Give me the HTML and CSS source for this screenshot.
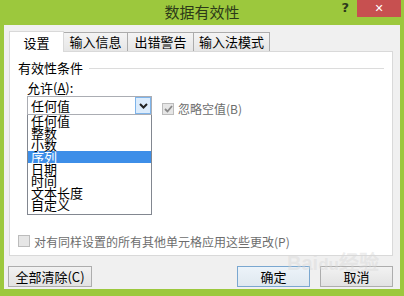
FILE: index.html
```html
<!DOCTYPE html>
<html lang="zh-CN">
<head>
  <meta charset="UTF-8" />
  <title>数据有效性</title>
  <link rel="stylesheet" href="styles.css">
</head>
<body>
  <div class="dialog">
    <div class="titlebar">
      <span></span>
      <span class="title">数据有效性</span>
      <div class="controls">
        <span class="help">?</span>
        <span class="close">✕</span>
      </div>
    </div>
    <div class="content">
      <div class="tabs">
        <span class="tab active">设置</span>
        <span class="tab">输入信息</span>
        <span class="tab">出错警告</span>
        <span class="tab">输入法模式</span>
      </div>
      <div class="panel">
        <div class="group-title"><span>有效性条件</span><i></i></div>
        <div class="label">允许(<u>A</u>):</div>
        <div class="row">
          <div class="combo">
            <div class="select">
              <span>任何值</span>
              <span class="arrow">
                <svg width="9" height="6" viewBox="0 0 9 6"><path d="M1 1 L4.5 4.5 L8 1" fill="none" stroke="#222" stroke-width="2"/></svg>
              </span>
            </div>
            <ul class="list">
              <li>任何值</li>
              <li>整数</li>
              <li>小数</li>
              <li class="sel">序列</li>
              <li>日期</li>
              <li>时间</li>
              <li>文本长度</li>
              <li>自定义</li>
            </ul>
          </div>
          <label class="check disabled">
            <span class="box checked">
              <svg width="9" height="8" viewBox="0 0 9 8"><path d="M1 4 L3.5 6.5 L8 1" fill="none" stroke="#8a8a8a" stroke-width="1.8"/></svg>
            </span>
            忽略空值(B)
          </label>
        </div>
        <label class="check disabled apply">
          <span class="box"></span>
          对有同样设置的所有其他单元格应用这些更改(P)
        </label>
      </div>
      <div class="buttons">
        <button class="btn">全部清除(C)</button>
        <span class="spacer"></span>
        <button class="btn default">确定</button>
        <button class="btn">取消</button>
      </div>
      <div class="watermark">Bai<span>du</span>经验</div>
    </div>
  </div>
</body>
</html>
```

FILE: styles.css
```css
* {
  box-sizing: border-box;
}
body {
  margin: 0;
  width: 404px;
  height: 296px;
  background: #9cc83d;
  font-family: "Noto Sans CJK SC", "Noto Sans", sans-serif;
  font-size: 12px;
  color: #000;
  overflow: hidden;
}
.dialog {
  display: flex;
  flex-direction: column;
  height: 296px;
}
.titlebar {
  height: 25px;
  flex: none;
  display: grid;
  grid-template-columns: 1fr auto 1fr;
  align-items: start;
}
.title {
  font-size: 15px;
  line-height: 24px;
  color: #2c3a19;
}
.controls {
  justify-self: end;
  display: flex;
  align-items: flex-start;
  margin-right: 3px;
}
.help {
  font-family: "DejaVu Sans", sans-serif;
  font-weight: bold;
  font-size: 13px;
  line-height: 16px;
  color: #2d3a1b;
  margin-right: 8px;
}
.close {
  width: 44px;
  height: 17px;
  background: #c75050;
  color: #fff;
  font-family: "DejaVu Sans", sans-serif;
  font-size: 11px;
  font-weight: bold;
  line-height: 17px;
  text-align: center;
}
.content {
  position: relative;
  height: 264px;
  flex: none;
  background: #f0f0f0;
  margin: 0 4px 0 4px;
  padding: 7px 7px 0 5px;
  display: flex;
  flex-direction: column;
}
.tabs {
  display: flex;
  align-items: flex-end;
  height: 19px;
  flex: none;
  position: relative;
  z-index: 1;
}
.tab {
  height: 19px;
  line-height: 18px;
  font-size: 13px;
  border: 1px solid #acacac;
  border-bottom: none;
  border-left: none;
  background: linear-gradient(#f4f4f4, #e6e6e6);
  text-align: center;
  white-space: nowrap;
}
.tab:nth-child(2) { width: 64px; }
.tab:nth-child(3) { width: 66px; }
.tab:nth-child(4) { width: 76px; }
.tab.active {
  width: 55px;
  height: 21px;
  line-height: 21px;
  background: #fff;
  border: 1px solid #d9d9d9;
  border-bottom: none;
  margin-bottom: -1px;
}
.panel {
  height: 205px;
  flex: none;
  background: #fff;
  border: 1px solid #d9d9d9;
  padding: 8px 8px 6px 8px;
  display: flex;
  flex-direction: column;
}
.group-title {
  display: flex;
  align-items: center;
  font-size: 13px;
  height: 16px;
  line-height: 16px;
}
.group-title i {
  flex: 1;
  height: 1px;
  background: #dcdcdc;
  margin-left: 6px;
}
.label {
  margin: 3px 0 0 9px;
  font-size: 13px;
  height: 17px;
  line-height: 17px;
}
.label u { text-decoration: underline; }
.row {
  display: flex;
  align-items: flex-start;
  margin-left: 9px;
}
.combo {
  width: 125px;
}
.select {
  height: 19px;
  border: 1px solid #abadb3;
  display: flex;
  align-items: center;
  justify-content: space-between;
  font-size: 13px;
  line-height: 17px;
  padding-left: 3px;
}
.arrow {
  width: 16px;
  height: 17px;
  background: #dcecfc;
  border: 1px solid #7eb4ea;
  display: flex;
  align-items: center;
  justify-content: center;
}
.list {
  list-style: none;
  margin: 0;
  padding: 0;
  height: 100px;
  border: 1px solid #828790;
  border-top: none;
  background: #fff;
}
.list li {
  height: 12px;
  line-height: 12px;
  font-size: 13px;
  padding-left: 3px;
  white-space: nowrap;
}
.list li.sel {
  background: #3d8ee8;
  color: #fff;
}
.check {
  display: flex;
  align-items: center;
  font-size: 12px;
  color: #6d6d6d;
  white-space: nowrap;
}
.row .check {
  margin: 4px 0 0 10px;
}
.box {
  width: 12px;
  height: 12px;
  border: 1px solid #bcbcbc;
  background: #e6e6e6;
  margin-right: 4px;
  display: flex;
  align-items: center;
  justify-content: center;
}
.apply {
  margin-top: auto;
  height: 16px;
}
.buttons {
  display: flex;
  flex: none;
  margin-top: 10px;
  gap: 10px;
}
.spacer { flex: 1; }
.btn {
  font-family: "Noto Sans CJK SC", "Noto Sans", sans-serif;
  font-size: 13px;
  height: 21px;
  width: 73px;
  padding: 0;
  line-height: 19px;
  border: 1px solid #adadad;
  background: linear-gradient(#f2f2f2, #e2e2e2);
  color: #000;
}
.btn:first-child { width: 84px; margin-left: -1px; }
.btn.default {
  border-color: #7aa7d0;
  background: linear-gradient(#ecf3f9, #dfe8f0);
}
.watermark {
  position: absolute;
  left: 283px;
  top: 222px;
  font-family: "Liberation Sans", sans-serif;
  font-size: 20px;
  font-weight: bold;
  color: rgba(215, 215, 215, 0.45);
  pointer-events: none;
}
.watermark span { font-size: 17px; }
```
